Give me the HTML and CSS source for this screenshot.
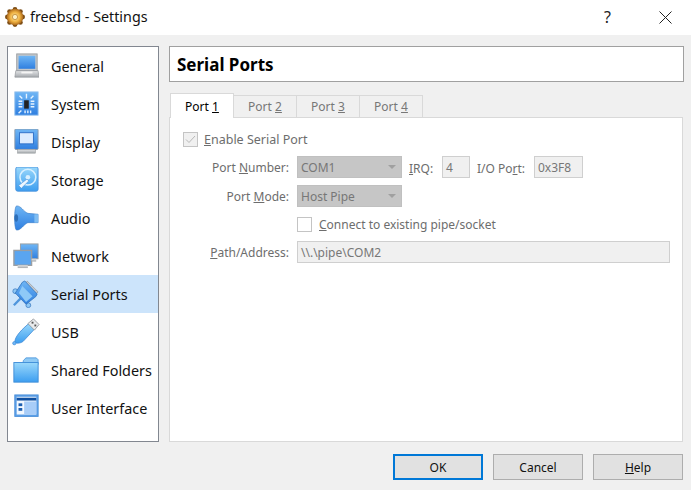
FILE: index.html
```html
<!DOCTYPE html>
<html lang="en">
<head>
<meta charset="utf-8">
<title>freebsd - Settings</title>
<link rel="stylesheet" href="styles.css">
</head>
<body>
<svg class="defs" width="0" height="0" aria-hidden="true">
  <defs>
    <linearGradient id="blue" x1="0" y1="0" x2="0" y2="1"><stop offset="0" stop-color="#6fb6f5"/><stop offset="1" stop-color="#2f7fe0"/></linearGradient>
    <linearGradient id="sky" x1="0" y1="0" x2="0" y2="1"><stop offset="0" stop-color="#9ad8fb"/><stop offset="1" stop-color="#3c9ef0"/></linearGradient>
    <linearGradient id="grey" x1="0" y1="0" x2="0" y2="1"><stop offset="0" stop-color="#e4e6e8"/><stop offset="1" stop-color="#a5a9ad"/></linearGradient>
    <radialGradient id="gold"><stop offset="0" stop-color="#fdeeb0"/><stop offset="0.6" stop-color="#eeb040"/><stop offset="1" stop-color="#a8651a"/></radialGradient>
  </defs>
</svg>
<div class="titlebar">
  <svg class="app-icon" viewBox="0 0 20 20">
    <g fill="#7d4e16"><circle cx="10" cy="2.400" r="2.400"/><circle cx="10" cy="17.600" r="2.400"/><circle cx="2.400" cy="10" r="2.400"/><circle cx="17.600" cy="10" r="2.400"/><circle cx="4.600" cy="4.600" r="2.400"/><circle cx="15.400" cy="4.600" r="2.400"/><circle cx="4.600" cy="15.400" r="2.400"/><circle cx="15.400" cy="15.400" r="2.400"/></g>
    <circle cx="10" cy="10" r="8.300" fill="url(#gold)"/>
    <circle cx="10" cy="10" r="2.600" fill="#fdf0c4" stroke="#b87a22" stroke-width=".7"/>
  </svg>
  <span class="title">freebsd - Settings</span>
  <span class="help-btn">?</span>
  <svg class="close-btn" viewBox="0 0 13 13"><path d="M.5.5l12 12M12.500.5l-12 12" stroke="#222" fill="none"/></svg>
</div>
<div class="main">
  <nav class="sidebar">
    <div class="nav-item">
      <svg class="ico" viewBox="0 0 28 28"><rect x="4" y="1" width="22" height="18" fill="#c4c7ca" stroke="#9a9ea2"/><rect x="6" y="3" width="18" height="14" fill="url(#blue)"/><path d="M3 19h24l1 7H2z" fill="url(#grey)" stroke="#8f9397" stroke-width=".7"/><rect x="9" y="20" width="12" height="2" fill="#f4f4f4"/></svg>
      <span>General</span>
    </div>
    <div class="nav-item">
      <svg class="ico" viewBox="0 0 28 28"><rect x="2" y="1" width="25" height="25" fill="url(#blue)" stroke="#8cbcec"/><rect x="12" y="10" width="5" height="9" fill="#222"/><path d="M14.500 3v5M6 11h4M6 14h4M6 17h4M19 11h4M19 14h4M19 17h4M7 5l3 3M22 5l-3 3M6 24l3-3M13 21v3M16 21v3M19 21v3" stroke="#e6f3ff" stroke-width="1.500" fill="none"/></svg>
      <span>System</span>
    </div>
    <div class="nav-item">
      <svg class="ico" viewBox="0 0 28 28"><rect x="2" y="0" width="25" height="22" rx="1" fill="url(#blue)" stroke="#8e9ba8"/><rect x="7" y="4" width="15" height="12" fill="#dcecff" stroke="#2c6fc8"/><rect x="5" y="22" width="19" height="4" fill="url(#grey)" stroke="#8f9397" stroke-width=".6"/></svg>
      <span>Display</span>
    </div>
    <div class="nav-item">
      <svg class="ico" viewBox="0 0 28 28"><rect x="3" y="0" width="24" height="26" rx="2" fill="url(#sky)" stroke="#4b92dc"/><circle cx="16" cy="11" r="8.500" fill="none" stroke="#d9f0ff" stroke-width="1.600"/><circle cx="16" cy="11" r="2.500" fill="#d9f0ff"/><path d="M6 20l9-7 2 2-8 8z" fill="#eef8ff" stroke="#4b92dc" stroke-width=".7"/></svg>
      <span>Storage</span>
    </div>
    <div class="nav-item">
      <svg class="ico" viewBox="0 0 28 28"><path d="M4 1c5 0 7 6 12 8l11 1v9l-11 0C11 21 9 27 4 27 1 27 1 1 4 1z" fill="url(#blue)" stroke="#3d7fc8" stroke-width=".7"/><ellipse cx="3.500" cy="14" rx="2" ry="4" fill="#2e6fb8"/><rect x="23" y="10" width="4" height="9" fill="#7fbdf2"/></svg>
      <span>Audio</span>
    </div>
    <div class="nav-item">
      <svg class="ico" viewBox="0 0 28 28"><rect x="8" y="1" width="19" height="16" fill="url(#blue)" stroke="#9a9ea2"/><rect x="1" y="8" width="19" height="16" fill="#5aa5f0" stroke="#9a9ea2" stroke-width="1.500"/><rect x="5" y="24" width="11" height="3" fill="url(#grey)"/><rect x="20" y="17" width="5" height="3" fill="url(#grey)"/></svg>
      <span>Network</span>
    </div>
    <div class="nav-item is-active">
      <svg class="ico ico-wide" viewBox="0 0 30 30"><path d="M9 20l-7 7" stroke="#4f95dc" stroke-width="2.500" fill="none"/><path d="M16.300 1.200L28 12.800l-2.500 2L14.300 3.700z" fill="#c9ccd0" stroke="#8f9397" stroke-width=".7"/><circle cx="3.500" cy="12" r="2.600" fill="#8fc8f6" stroke="#2e6fb8" stroke-width=".7"/><circle cx="17.500" cy="27" r="2.600" fill="#8fc8f6" stroke="#2e6fb8" stroke-width=".7"/><path d="M11 2.500l2.700-1.500L27 15l-1.500 2.800L15 26 3.500 14z" fill="url(#blue)" stroke="#2e6fb8" stroke-width=".8"/><path d="M11 6.500l11 11-7 6L7.500 14z" fill="#8ec9f7"/></svg>
      <span>Serial Ports</span>
    </div>
    <div class="nav-item">
      <svg class="ico ico-wide" viewBox="0 0 30 30"><path d="M18 6l6 6-12 13C8 28 3 27 3 26c0-4 3-10 15-20z" fill="url(#sky)" stroke="#3c86d4" stroke-width=".8"/><path d="M17 6l6-5 6 6-5 6z" fill="#e8eaec" stroke="#85898d" stroke-width=".8"/><rect x="21" y="4" width="2" height="2" fill="#555"/><rect x="24" y="7" width="2" height="2" fill="#555"/><circle cx="2.500" cy="27" r="1.800" fill="#6fb6f5" stroke="#3c86d4" stroke-width=".6"/></svg>
      <span>USB</span>
    </div>
    <div class="nav-item">
      <svg class="ico ico-wide" viewBox="0 0 30 30"><path d="M12 5l3-3h11l2 2v5H12z" fill="#8fcaf5" stroke="#3f8ed8" stroke-width=".8"/><rect x="2" y="7" width="26" height="21" fill="url(#sky)" stroke="#3f8ed8"/></svg>
      <span>Shared Folders</span>
    </div>
    <div class="nav-item">
      <svg class="ico ico-wide" viewBox="0 0 30 30"><rect x="3" y="1" width="25" height="23" fill="#5a9fe8" stroke="#4c8fd8"/><rect x="5" y="3" width="21" height="19" fill="#f2f8ff"/><rect x="5" y="4" width="21" height="3" fill="#0f4fa0"/><rect x="13" y="8" width="13" height="14" fill="#a8cdf8"/><rect x="7" y="10" width="4" height="3" fill="#1d5fb0"/><rect x="7" y="15" width="4" height="3" fill="#1d5fb0"/></svg>
      <span>User Interface</span>
    </div>
  </nav>
  <div class="content">
    <h1 class="page-title">Serial Ports</h1>
    <div class="tabs">
      <div class="tab is-active">Port <u>1</u></div>
      <div class="tab">Port <u>2</u></div>
      <div class="tab">Port <u>3</u></div>
      <div class="tab">Port <u>4</u></div>
    </div>
    <div class="panel">
      <div class="enable-row">
        <svg class="check" viewBox="0 0 15 15"><rect x=".5" y=".5" width="14" height="14" fill="#f0f0f0" stroke="#c4c4c4"/><path d="M3 7.500l3 3 6-6.500" fill="none" stroke="#b8b8b8"/></svg>
        <span><u>E</u>nable Serial Port</span>
      </div>
      <div class="form">
        <label class="lbl">Port <u>N</u>umber:</label>
        <div class="line">
          <div class="combo">COM1</div>
          <label class="lbl-irq"><u>I</u>RQ:</label>
          <div class="field field-irq">4</div>
          <label class="lbl-io">I/O Po<u>r</u>t:</label>
          <div class="field field-io">0x3F8</div>
        </div>
        <label class="lbl">Port <u>M</u>ode:</label>
        <div class="line"><div class="combo">Host Pipe</div></div>
        <span></span>
        <div class="line line-check">
          <span class="check-empty"></span>
          <span class="check-label"><u>C</u>onnect to existing pipe/socket</span>
        </div>
        <label class="lbl"><u>P</u>ath/Address:</label>
        <div class="line"><div class="field field-path">\\.\pipe\COM2</div></div>
      </div>
    </div>
  </div>
</div>
<div class="footer">
  <div class="btn is-default">OK</div>
  <div class="btn">Cancel</div>
  <div class="btn"><u>H</u>elp</div>
</div>
</body>
</html>
```
FILE: styles.css
```css
* { box-sizing: border-box; }
html, body { margin: 0; padding: 0; }
body {
  width: 691px;
  height: 490px;
  overflow: hidden;
  background: #f0f0f0;
  font-family: "Noto Sans", sans-serif;
  font-size: 12px;
  color: #000;
}
.defs { position: absolute; }
.titlebar {
  height: 35px;
  background: #fff;
  display: flex;
  align-items: center;
  padding: 0 19px 1px 5px;
}
.app-icon { width: 20px; height: 20px; margin-right: 5px; }
.title { flex: 1; font-size: 14.300px; color: #111; line-height: 18px; }
.help-btn { font-size: 16px; color: #222; margin: 0 48px 0 6px; }
.close-btn { width: 13px; height: 13px; }
.main {
  display: flex;
  height: 407px;
  padding: 11px 7px 0 7px;
  gap: 10px;
}
.sidebar {
  width: 152px;
  height: 396px;
  background: #fff;
  border: 1px solid #828790;
}
.nav-item {
  height: 38px;
  display: flex;
  align-items: center;
  padding-left: 5px;
  font-size: 14.400px;
  color: #111;
}
.nav-item span { margin-left: 12px; }
.nav-item.is-active { background: #cce4fb; }
.ico { width: 26px; height: 26px; flex: none; }
.ico-wide { width: 28px; height: 28px; margin-left: -1px; margin-right: -1px; }
.content { flex: 1; display: flex; flex-direction: column; }
.page-title {
  margin: 0;
  height: 36px;
  background: #fff;
  border: 1px solid #a0a0a0;
  font-size: 17px;
  font-weight: 700;
  line-height: 36px;
  padding-left: 7px;
}
.tabs {
  display: flex;
  margin-top: 11px;
  height: 24px;
  padding-left: 1px;
  align-items: flex-end;
  position: relative;
  z-index: 1;
}
.tab {
  height: 22px;
  width: 63px;
  border: 1px solid #d9d9d9;
  border-left-width: 0;
  border-bottom-width: 0;
  background: #f0f0f0;
  color: #777;
  text-align: center;
  line-height: 22px;
}
.tab.is-active {
  width: 64px;
  height: 25px;
  background: #fff;
  color: #000;
  border-left-width: 1px;
  line-height: 25px;
  margin-bottom: -1px;
}
.panel {
  width: 514px;
  height: 325px;
  background: #fff;
  border: 1px solid #d9d9d9;
  padding: 14px 13px 0 13px;
  color: #6d6d6d;
}
.enable-row { display: flex; align-items: center; height: 15px; gap: 6px; font-size: 12.500px; }
.check { width: 15px; height: 15px; }
.form {
  display: grid;
  grid-template-columns: 106px 1fr;
  grid-template-rows: 22px 22px 20px 22px;
  column-gap: 8px;
  row-gap: 7px;
  margin-top: 9px;
}
.lbl { text-align: right; line-height: 24px; white-space: nowrap; }
.line { display: flex; align-items: center; }
.line-check { gap: 7px; }
.check-label { padding-top: 1px; }
.check-empty { width: 15px; height: 15px; border: 1px solid #c4c4c4; background: #fff; }
.combo {
  width: 105px;
  height: 22px;
  background: #c6c6c6;
  border: 1px solid #c0c0c0;
  padding-left: 3px;
  line-height: 22px;
  position: relative;
  color: #777;
}
.combo::after {
  content: "";
  position: absolute;
  right: 5px;
  top: 8px;
  border-left: 4px solid transparent;
  border-right: 4px solid transparent;
  border-top: 4px solid #a0a0a0;
}
.field {
  height: 22px;
  background: #f0f0f0;
  border: 1px solid #cfcfcf;
  padding-left: 3px;
  line-height: 22px;
  color: #777;
}
.lbl-irq { margin-left: 7px; width: 33px; padding-top: 2px; }
.lbl-io { margin-left: 7px; width: 57px; padding-top: 2px; }
.field-irq { width: 28px; }
.field-io { width: 49px; }
.field-path { width: 373px; }
.footer {
  display: flex;
  justify-content: flex-end;
  gap: 10px;
  padding: 12px 8px 0 0;
}
.btn {
  width: 90px;
  height: 26px;
  background: #e1e1e1;
  border: 1px solid #adadad;
  text-align: center;
  line-height: 25px;
  color: #111;
}
.btn.is-default { border: 2px solid #0078d7; line-height: 23px; }
```
